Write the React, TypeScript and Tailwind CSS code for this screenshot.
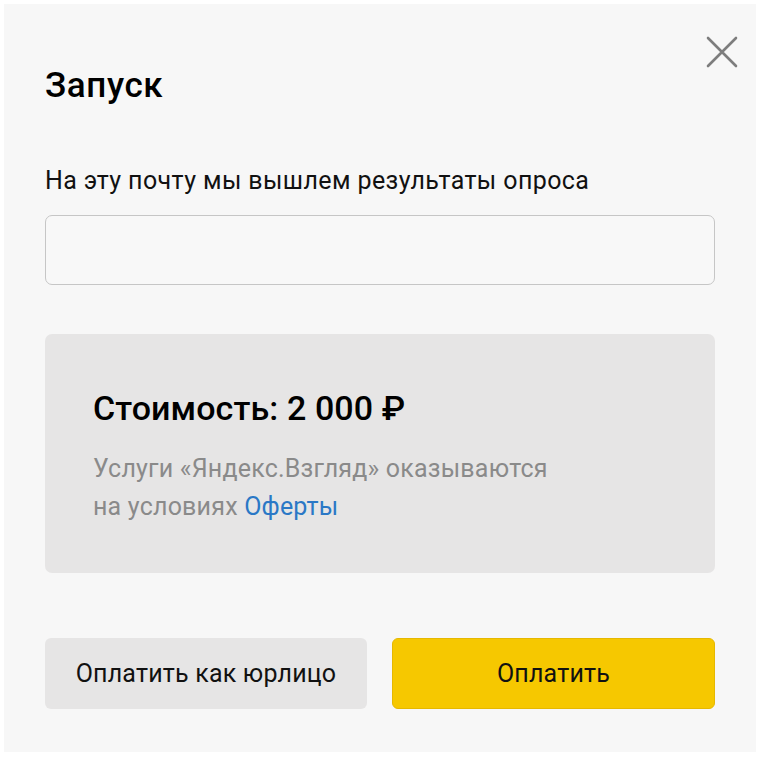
import React from "react";

export default function App() {
  return (
    <div
      className="w-[760px] h-[760px] bg-white px-[4px] pt-[4px] pb-[8px]"
      style={{ fontFamily: "Roboto, 'Noto Sans', sans-serif" }}
    >
      <div className="relative w-full h-full bg-[#f7f7f7] px-[41px] pt-[62px] text-[#000]">
        <button className="absolute right-[16px] top-[30px] w-[36px] h-[36px] flex items-center justify-center">
          <svg width="34" height="34" viewBox="0 0 34 34">
            <path d="M3 3 L31 31 M31 3 L3 31" stroke="#7d7d7d" strokeWidth="2.6" strokeLinecap="round" />
          </svg>
        </button>
        <h1 className="text-[35px] leading-[40px] font-medium tracking-[0.6px]">Запуск</h1>
        <p className="mt-[60px] text-[25px] leading-[30px] text-[#111] tracking-[0.4px]">
          На эту почту мы вышлем результаты опроса
        </p>
        <input
          className="mt-[19px] block w-full h-[70px] rounded-[7px] border-[1.5px] border-[#c6c6c6] bg-[#f8f8f8] outline-none"
          type="email"
        />
        <div className="mt-[49px] h-[239px] rounded-[7px] bg-[#e6e5e5] px-[48px] pt-[54px]">
          <div className="text-[34px] leading-[40px] font-medium tracking-[0.1px]">Стоимость: 2 000 ₽</div>
          <p className="mt-[22px] text-[25px] leading-[38px] text-[#8a8a8a] tracking-[0.2px]">
            Услуги «Яндекс.Взгляд» оказываются
            <br />
            на условиях <span className="text-[#2a78c6]">Оферты</span>
          </p>
        </div>
        <div className="mt-[65px] flex gap-[25px]">
          <button className="w-[322px] h-[71px] rounded-[6px] bg-[#e6e5e5] text-[25px] text-[#111] tracking-[0.2px]">
            Оплатить как юрлицо
          </button>
          <button className="flex-1 h-[71px] rounded-[6px] bg-[#f6c800] border border-[#e6b800] text-[25px] text-[#111] tracking-[0.2px]">
            Оплатить
          </button>
        </div>
      </div>
    </div>
  );
}
